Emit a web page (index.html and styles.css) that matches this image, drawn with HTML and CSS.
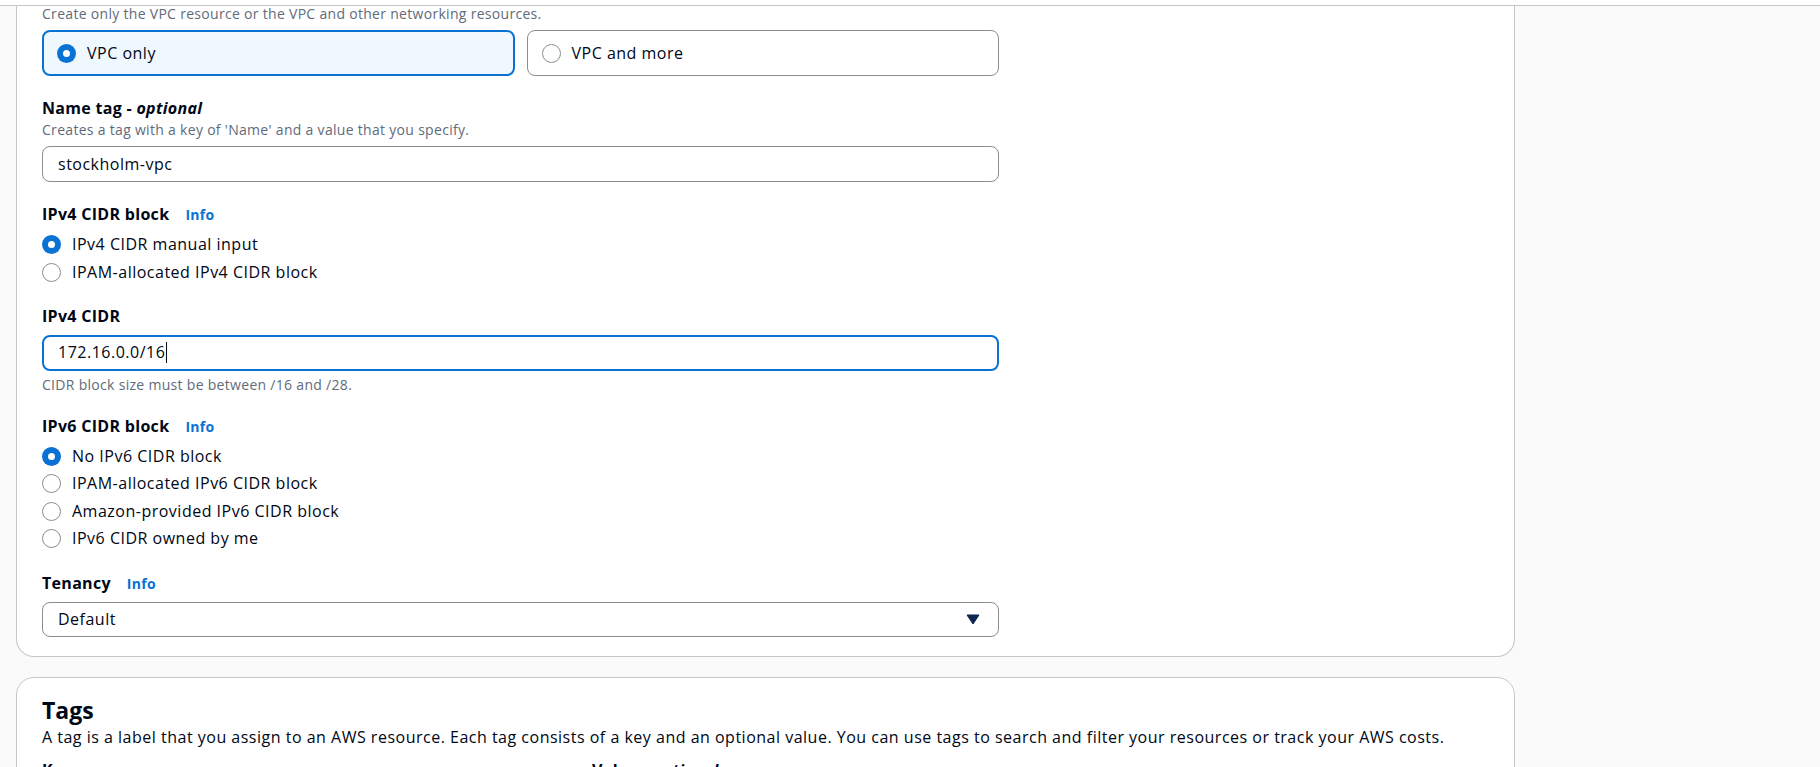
FILE: index.html
```html
<!DOCTYPE html>
<html lang="en">
<head>
<meta charset="utf-8">
<title>Create VPC</title>
<link rel="stylesheet" href="styles.css">
</head>
<body>
<div class="topbar"></div>
<div class="main">
  <section class="card card-clipped">
    <div class="form">
      <div class="hint hint-top">Create only the VPC resource or the VPC and other networking resources.</div>
      <div class="tiles">
        <div class="tile selected"><span class="radio checked"></span><span>VPC only</span></div>
        <div class="tile"><span class="radio"></span><span>VPC and more</span></div>
      </div>

      <div class="field">
        <div class="label">Name tag - <em>optional</em></div>
        <div class="hint hint-desc">Creates a tag with a key of 'Name' and a value that you specify.</div>
        <div class="input control">stockholm-vpc</div>
      </div>

      <div class="field">
        <div class="label">IPv4 CIDR block<span class="info">Info</span></div>
        <div class="radios">
          <div class="radio-row"><span class="radio checked"></span><span>IPv4 CIDR manual input</span></div>
          <div class="radio-row"><span class="radio"></span><span>IPAM-allocated IPv4 CIDR block</span></div>
        </div>
      </div>

      <div class="field">
        <div class="label">IPv4 CIDR</div>
        <div class="input focus control">172.16.0.0/16<span class="caret-line"></span></div>
        <div class="hint constraint">CIDR block size must be between /16 and /28.</div>
      </div>

      <div class="field">
        <div class="label">IPv6 CIDR block<span class="info">Info</span></div>
        <div class="radios">
          <div class="radio-row"><span class="radio checked"></span><span>No IPv6 CIDR block</span></div>
          <div class="radio-row"><span class="radio"></span><span>IPAM-allocated IPv6 CIDR block</span></div>
          <div class="radio-row"><span class="radio"></span><span>Amazon-provided IPv6 CIDR block</span></div>
          <div class="radio-row"><span class="radio"></span><span>IPv6 CIDR owned by me</span></div>
        </div>
      </div>

      <div class="field field-tenancy">
        <div class="label">Tenancy<span class="info">Info</span></div>
        <div class="input select control">
          <span>Default</span>
          <svg class="select-caret" width="14" height="11" viewBox="0 0 14 11"><path d="M1 1h12L7 10z" fill="#0d2550" stroke="#0d2550" stroke-width="1" stroke-linejoin="round"/></svg>
        </div>
      </div>
    </div>
  </section>

  <section class="card card-tags">
    <h2 class="heading">Tags</h2>
    <p class="tags-desc">A tag is a label that you assign to an AWS resource. Each tag consists of a key and an optional value. You can use tags to search and filter your resources or track your AWS costs.</p>
    <div class="tag-labels">
      <div class="label">Key</div>
      <div class="label">Value - <em>optional</em></div>
    </div>
  </section>
</div>
</body>
</html>
```
FILE: styles.css
```css
* { box-sizing: border-box; }
html, body { margin: 0; padding: 0; }
body {
  background: #fafafa;
  font-family: "Open Sans", Roboto, Arial, sans-serif;
  color: #000716;
  font-size: 16px;
  line-height: 23px;
  letter-spacing: 0.5px;
  width: 1820px;
  height: 767px;
  overflow: hidden;
}
.topbar {
  height: 6px;
  background: #ffffff;
  border-bottom: 1px solid #c6c6cd;
}
.main {
  padding-left: 16px;
}
.card {
  width: 1499px;
  background: #ffffff;
  border: 1px solid #c6c6cd;
  border-radius: 18px;
  padding: 0 24px 19px 25px;
}
.card-clipped {
  border-top: none;
  border-top-left-radius: 0;
  border-top-right-radius: 0;
}
.form { width: 957px; }
.hint {
  font-size: 14px;
  line-height: 18px;
  letter-spacing: 0.3px;
  color: #5f6b7a;
}
.hint-top { line-height: 16px; }
.hint-desc { margin-top: 1px; }
.tiles {
  display: grid;
  grid-template-columns: 1fr 1fr;
  gap: 12px;
  margin-top: 8px;
}
.tile {
  display: flex;
  align-items: center;
  gap: 11px;
  height: 46px;
  border: 1px solid #8c8c94;
  border-radius: 8px;
  padding-left: 14px;
}
.tile.selected {
  border: 2px solid #0972d3;
  background: #f0f8ff;
  padding-left: 13px;
}
.radio {
  width: 19px;
  height: 19px;
  border-radius: 50%;
  border: 1.5px solid #8c8c94;
  background: #ffffff;
  flex: none;
  display: flex;
  align-items: center;
  justify-content: center;
}
.radio.checked {
  border: none;
  background: #0972d3;
}
.radio.checked::after {
  content: "";
  width: 7px;
  height: 7px;
  border-radius: 50%;
  background: #ffffff;
}
.field { margin-top: 21px; }
.field-tenancy { margin-top: 22px; }
.label {
  font-weight: 700;
  line-height: 23px;
  letter-spacing: 0.3px;
}
.label em { font-style: italic; }
.info {
  color: #0972d3;
  font-size: 14px;
  font-weight: 700;
  margin-left: 16px;
}
.control { margin-top: 7px; }
.input {
  height: 36px;
  border: 1px solid #8c8c94;
  border-radius: 8px;
  padding: 0 18px 0 15px;
  display: flex;
  align-items: center;
}
.input.focus {
  border: 2px solid #0972d3;
  padding-left: 14px;
}
.caret-line {
  display: inline-block;
  width: 1px;
  height: 21px;
  background: #000716;
  margin-left: 1px;
}
.select { justify-content: space-between; height: 35px; }
.radios {
  margin-top: 7px;
  display: flex;
  flex-direction: column;
  gap: 4.5px;
}
.radio-row {
  display: flex;
  align-items: center;
  gap: 11px;
  height: 23px;
}
.constraint { margin-top: 5px; }
.card-tags {
  margin-top: 20px;
  padding: 18px 24px 0 25px;
  height: 200px;
}
.heading {
  margin: 0;
  font-size: 23px;
  line-height: 28px;
  font-weight: 700;
  letter-spacing: 0;
}
.tags-desc {
  margin: 2px 0 0;
  font-size: 16px;
  line-height: 23px;
  color: #000716;
}
.tag-labels {
  display: grid;
  grid-template-columns: 530px 1fr;
  gap: 20px;
  margin-top: 10px;
}
```
